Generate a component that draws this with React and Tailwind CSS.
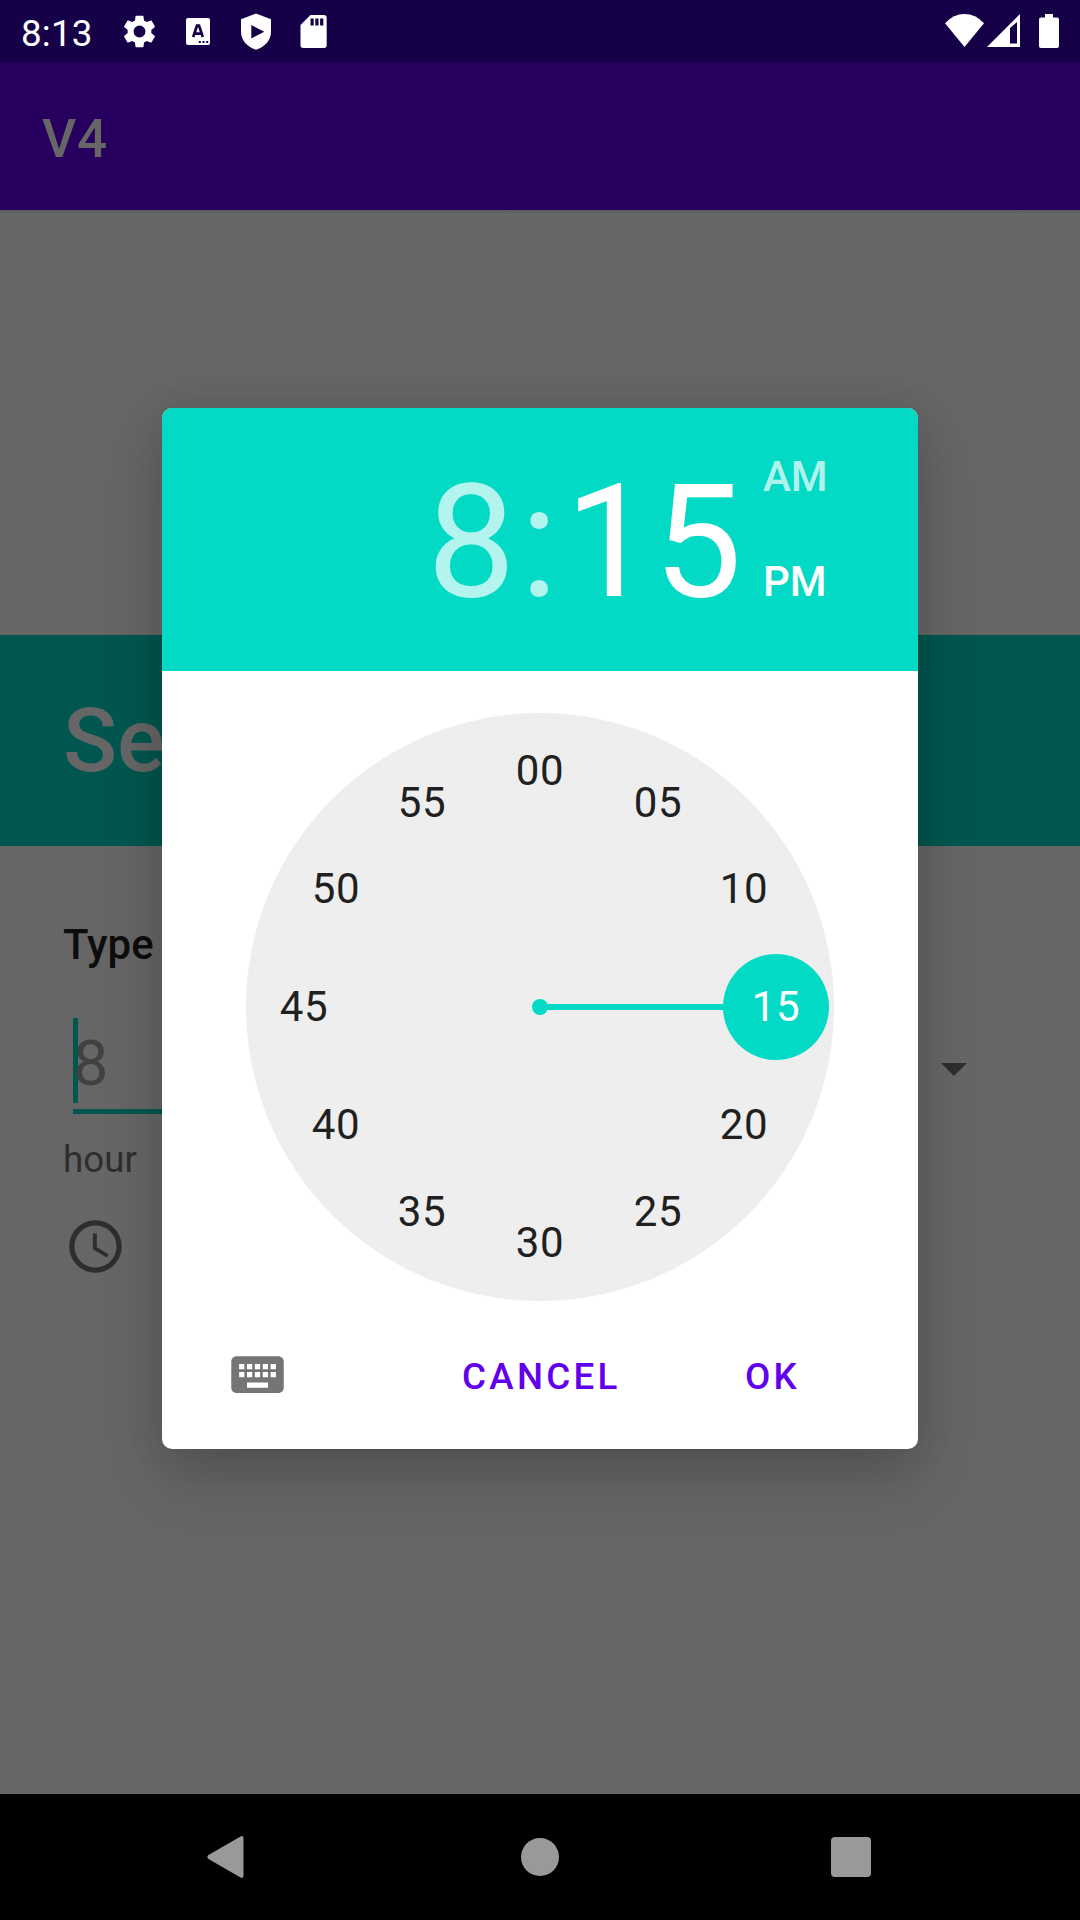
import React from "react";

const MINUTES = ["00", "05", "10", "15", "20", "25", "30", "35", "40", "45", "50", "55"];
const DIAL_RADIUS = 294;
const LABEL_RADIUS = 236;

function StatusBar() {
  return (
    <div className="flex h-[63px] shrink-0 items-start bg-[#160047] pl-[21px] text-white">
      <span className="mt-1 w-[102px] text-[36.75px] leading-[60px] tracking-[0.2px]">8:13</span>
      <svg className="mt-[15px] h-[33px] w-[33px]" viewBox="2.2 2 19.6 20" fill="currentColor">
        <path d="M19.14 12.94c.04-.3.06-.61.06-.94 0-.32-.02-.64-.07-.94l2.03-1.58c.18-.14.23-.41.12-.61l-1.92-3.32c-.12-.22-.37-.29-.59-.22l-2.39.96c-.5-.38-1.03-.7-1.62-.94l-.36-2.54C14.36 2.57 14.16 2.4 13.92 2.4h-3.84c-.24 0-.43.17-.47.41l-.36 2.54c-.59.24-1.13.57-1.62.94l-2.39-.96c-.22-.08-.47 0-.59.22L2.74 8.87c-.12.21-.08.47.12.61l2.03 1.58c-.05.3-.09.63-.09.94s.02.64.07.94l-2.03 1.58c-.18.14-.23.41-.12.61l1.92 3.32c.12.22.37.29.59.22l2.39-.96c.5.38 1.03.7 1.62.94l.36 2.54c.05.24.24.41.48.41h3.84c.24 0 .44-.17.47-.41l.36-2.54c.59-.24 1.13-.56 1.62-.94l2.39.96c.22.08.47 0 .59-.22l1.92-3.32c.12-.22.07-.47-.12-.61l-2.01-1.58zM12 15.6A3.6 3.6 0 1 1 12 8.4a3.6 3.6 0 0 1 0 7.2z" />
      </svg>
      <svg className="mt-[18px] ml-[30px] h-[27px] w-6" viewBox="0 0 24 27">
        <rect width="24" height="27" rx="2" fill="currentColor" />
        <path d="M7.2 19 11 7.6h2L16.8 19M8.6 15.6h6.8" fill="none" stroke="#160047" strokeWidth="2.7" />
        <path d="M12.8 23h2v2h-2zM16.5 23h2v2h-2zM20.2 23h2v2h-2z" fill="#160047" />
      </svg>
      <svg className="mt-[13px] ml-[31px] h-[37px] w-[30px]" viewBox="0 0 30 37">
        <path d="M15 .6 30 6.3v12.4c0 8.6-6.2 15.2-15 18C6.200 33.900 0 27.300 0 18.700V6.300z" fill="currentColor" />
        <path d="M10.300 12v13.400L23.300 18.700z" fill="#160047" />
      </svg>
      <svg className="mt-[15px] ml-[29px] h-[33px] w-[27px]" viewBox="0 0 27 33">
        <path d="M10.500 0H24q2.700 0 2.700 2.700V30.300q0 2.700-2.700 2.700H3.200Q.5 33 .5 30.300V10z" fill="currentColor" />
        <path d="M10.500 3.500h3.200v7h-3.200zM15.300 3.500h3.200v7h-3.200zM20.100 3.500h3.200v7h-3.200z" fill="#160047" />
      </svg>
      <svg className="mt-[14px] ml-auto h-[33px] w-[39px]" viewBox="0 0 39 33">
        <path d="M0 9.200Q8.500 0 19.500 0T39 9.200L19.500 33z" fill="currentColor" />
      </svg>
      <svg className="mt-[14px] ml-[3px] h-[33px] w-[33px]" viewBox="0 0 33 33">
        <path fillRule="evenodd" d="M33 0v33H0zM23 14v15.500h7V8z" fill="currentColor" />
      </svg>
      <svg className="mt-[14px] mr-[21px] ml-[19px] h-[34px] w-5" viewBox="0 0 20 34">
        <path d="M6 0h8v3.500h4q2 0 2 2V32q0 2-2 2H2q-2 0-2-2V5.500q0-2 2-2h4z" fill="currentColor" />
      </svg>
    </div>
  );
}

function Page() {
  return (
    <main className="flex flex-1 flex-col">
      <div className="h-1 bg-linear-to-b from-[#5b5b5b] to-[#666666]" />
      <div className="mt-[421px] flex h-[211px] items-center bg-[#01574f] pl-[63px] text-[89.25px] leading-none font-medium text-[#666666]">
        Se
      </div>
      <div className="mt-[74px] pl-[63px] text-[42px] leading-[50px] font-medium text-[#0d0d0d]">Type</div>
      <div className="mt-[48px] flex h-[96px] items-start pl-[73px]">
        <div className="flex h-[96px] w-[220px] items-start border-b-5 border-[#01574f]">
          <div className="h-[85px] w-[5px] bg-[#01574f]" />
          <span className="-ml-[5px] text-[63px] leading-[91px] text-[#414141]">8</span>
        </div>
        <svg className="mt-[45px] ml-[648px] h-[13px] w-[26px]" viewBox="0 0 26 13">
          <path d="M0 0h26L13 13z" fill="#2e2e2e" />
        </svg>
      </div>
      <div className="mt-[26px] pl-[63px] text-[36.75px] leading-[40px] text-[#2e2e2e]">hour</div>
      <svg className="mt-[35px] ml-[64px] h-[63px] w-[63px]" viewBox="0 0 24 24" fill="#2e2e2e">
        <path d="M11.990 2C6.470 2 2 6.480 2 12s4.470 10 9.990 10C17.520 22 22 17.520 22 12S17.520 2 11.990 2zM12 20c-4.420 0-8-3.580-8-8s3.580-8 8-8 8 3.580 8 8-3.580 8-8 8zm.5-13H11v6l5.250 3.150.75-1.230-4.500-2.670z" />
      </svg>
    </main>
  );
}

function NavBar() {
  return (
    <nav className="flex h-[126px] shrink-0 items-center bg-black text-[#999999]">
      <svg className="ml-[207px] h-[42px] w-[37px]" viewBox="0 0 37 42" fill="currentColor">
        <path d="M33.500.4Q36.500-.8 36.500 2.500V39.500q0 3.300-3 2.100L1.500 23Q-.8 21 1.500 19z" />
      </svg>
      <div className="ml-[277px] size-[38px] rounded-full bg-[#999999]" />
      <div className="ml-[272px] size-10 rounded-[4px] bg-[#999999]" />
    </nav>
  );
}

function Dial() {
  return (
    <div className="relative mx-auto mt-[42px] size-[588px] shrink-0 rounded-full bg-[#eeeeee]">
      <div className="absolute top-[291px] left-[294px] h-[6px] w-[190px] bg-[#03dac5]" />
      <div className="absolute top-[286px] left-[286px] size-4 rounded-full bg-[#03dac5]" />
      {MINUTES.map((label, i) => {
        const angle = (i * Math.PI) / 6;
        const selected = label === "15";
        const lowerDiagonal = label === "25" || label === "35";
        return (
          <div
            key={label}
            className={
              selected
                ? "absolute flex size-[106px] -translate-1/2 items-center justify-center rounded-full bg-[#03dac5] text-[42px] leading-none tracking-[0.7px] text-white"
                : "absolute flex size-[106px] -translate-1/2 items-center justify-center text-[42px] leading-none tracking-[0.7px] text-[#202020]"
            }
            style={{
              left: Math.round(DIAL_RADIUS + LABEL_RADIUS * Math.sin(angle)),
              top: Math.round(DIAL_RADIUS - LABEL_RADIUS * Math.cos(angle)) + (lowerDiagonal ? 1 : 0),
            }}
          >
            {label}
          </div>
        );
      })}
    </div>
  );
}

function TimePicker() {
  return (
    <section className="flex h-[1041px] w-[756px] flex-col overflow-hidden rounded-[10px] bg-white shadow-[0_32px_60px_rgba(0,0,0,0.17),0_0_40px_rgba(0,0,0,0.1)]">
      <header className="flex h-[263px] shrink-0 bg-[#03dac5] text-white">
        <div className="ml-[265px] flex h-[270px] items-center text-[157.5px] leading-none">
          <span className="w-[93px] text-white/70">8</span>
          <span className="w-[45px] text-white/70">:</span>
          <span className="w-[174px]">15</span>
        </div>
        <div className="mt-[44px] ml-[24px] flex flex-col gap-[55px] text-[42px] leading-[50px] font-medium">
          <span className="text-white/70">AM</span>
          <span>PM</span>
        </div>
      </header>
      <Dial />
      <footer className="mt-[42px] flex h-[63px] items-center text-[36.75px] leading-none font-medium tracking-[3.280px] text-[#6200ee]">
        <svg className="ml-[64px] size-[63px]" viewBox="0 0 24 24" fill="#757575">
          <path d="M20 5H4c-1.100 0-1.990.9-1.990 2L2 17c0 1.100.9 2 2 2h16c1.100 0 2-.9 2-2V7c0-1.100-.9-2-2-2zm-9 3h2v2h-2V8zm0 3h2v2h-2v-2zM8 8h2v2H8V8zm0 3h2v2H8v-2zm-1 2H5v-2h2v2zm0-3H5V8h2v2zm9 7H8v-2h8v2zm0-4h-2v-2h2v2zm0-3h-2V8h2v2zm3 3h-2v-2h2v2zm0-3h-2V8h2v2z" />
        </svg>
        <span className="mt-[6px] ml-[173px] w-[283px]">CANCEL</span>
        <span className="mt-[6px]">OK</span>
      </footer>
    </section>
  );
}

export default function App() {
  return (
    <div className="relative flex h-[1920px] w-[1080px] flex-col overflow-hidden bg-[#666666] font-[Roboto,sans-serif]">
      <StatusBar />
      <div className="flex h-[147px] shrink-0 items-center bg-[#27005f] pt-[6px] pl-[42px] text-[53px] leading-none font-medium tracking-[0.8px] text-[#666666]">
        V4
      </div>
      <Page />
      <NavBar />
      <div className="absolute top-[408px] left-[162px]">
        <TimePicker />
      </div>
    </div>
  );
}
